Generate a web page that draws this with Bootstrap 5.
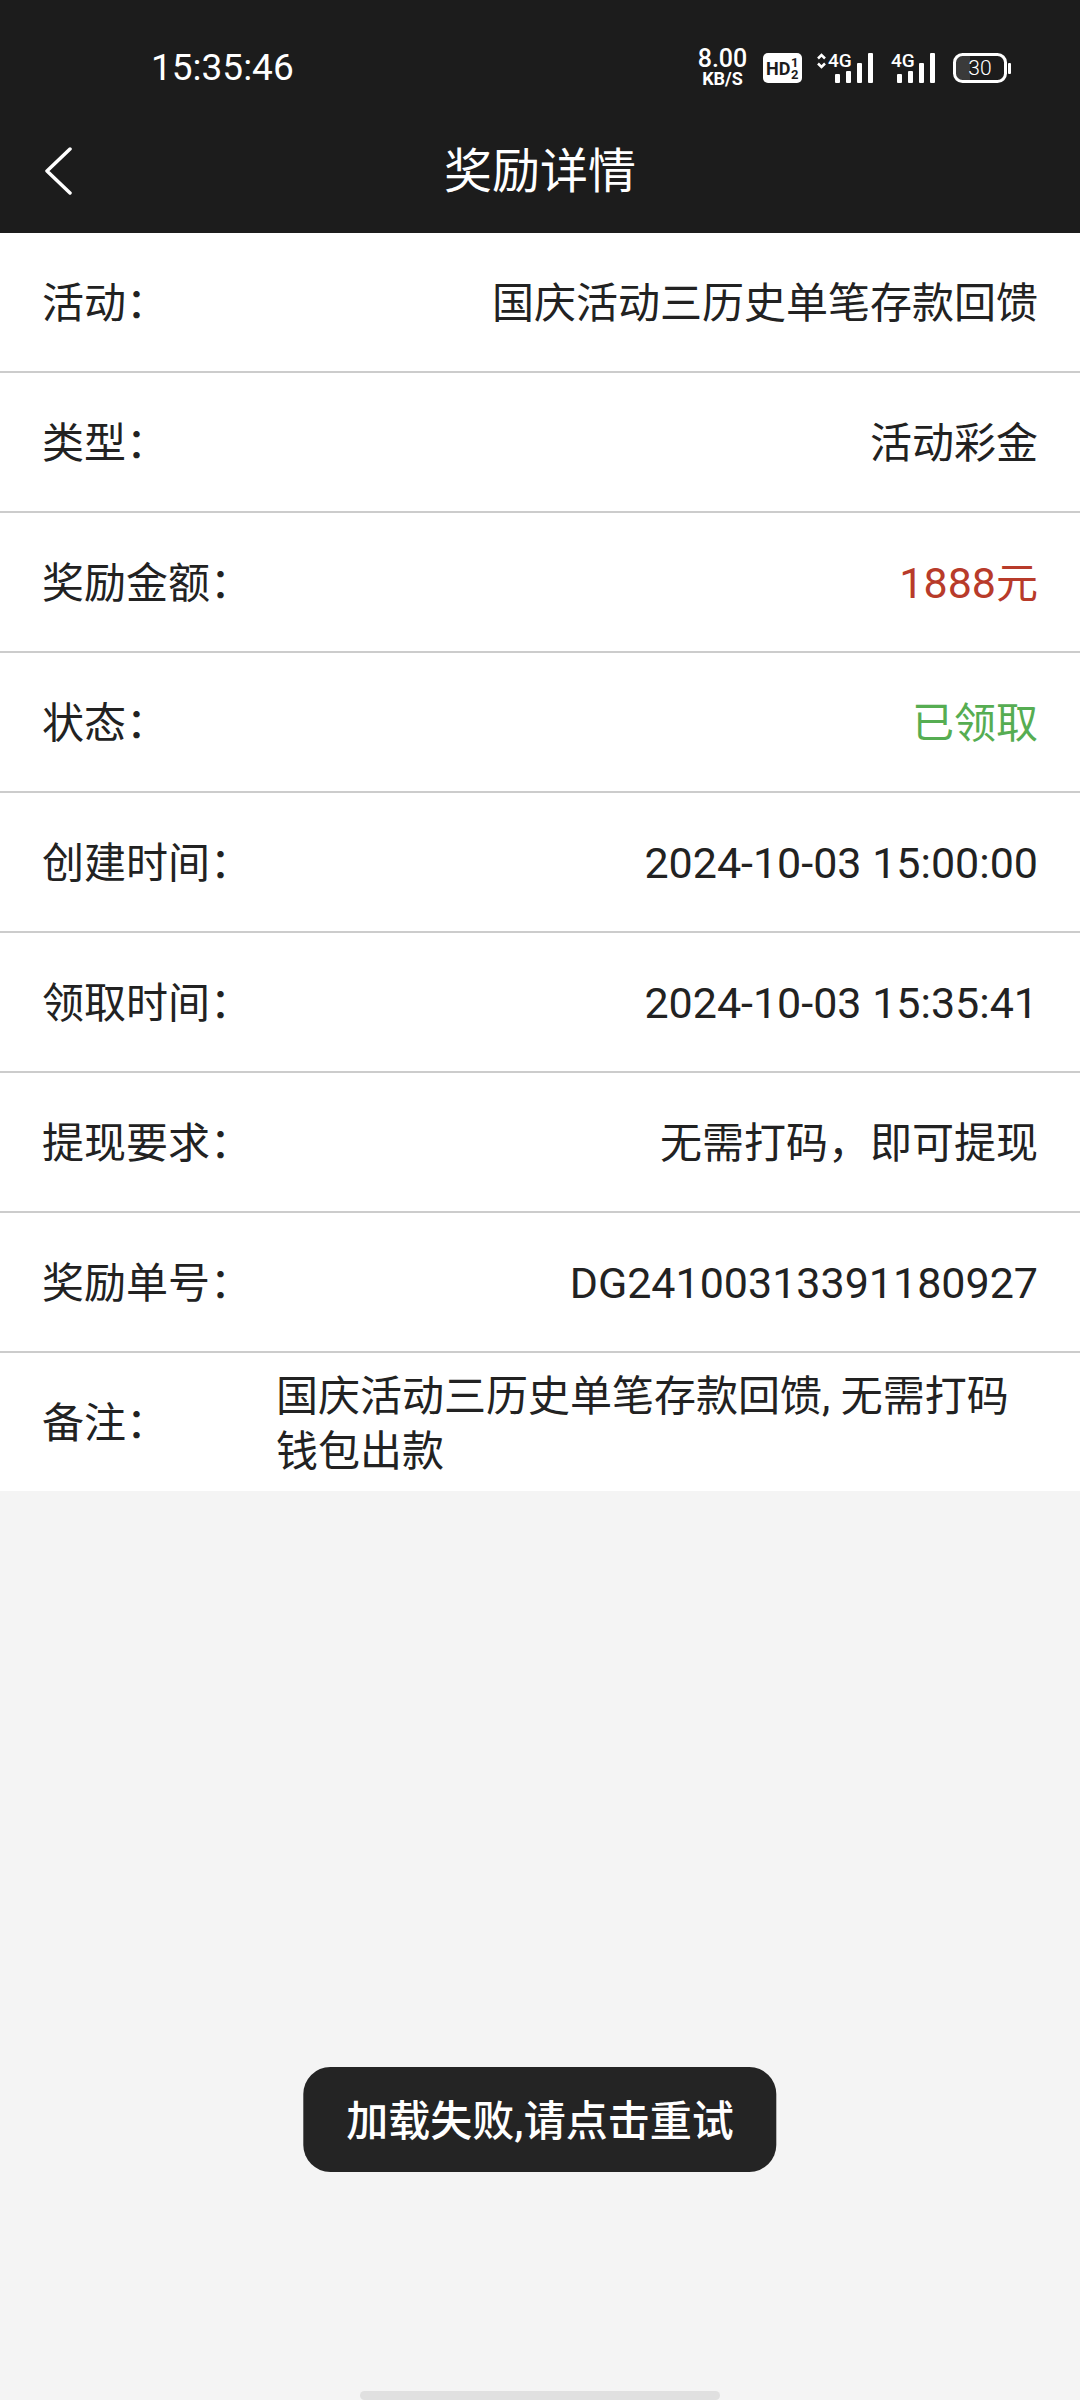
<!DOCTYPE html>
<html lang="zh-CN">
<head>
<meta charset="utf-8">
<meta name="viewport" content="width=device-width, initial-scale=1">
<title>奖励详情</title>
<link href="https://cdn.jsdelivr.net/npm/bootstrap@5.3.0/dist/css/bootstrap.min.css" rel="stylesheet">
<style>
  body { background: #f4f4f4; color: #222; font-family: Roboto, "Noto Sans CJK SC", sans-serif; font-size: 42px; line-height: 55px; }
  .top-area { background: #1c1c1c; }
  .status-strip { height: 108px; padding: 28px 69px 0 151px; }
  .clock { font-size: 37px; line-height: 40px; }
  .status-icons { gap: 15px; }
  .status-icons svg { overflow: visible; }
  .net-speed { width: 51px; font-size: 25px; line-height: 22px; font-weight: 500; }
  .net-unit { font-size: 18px; line-height: 18px; font-weight: 700; }
  .app-bar { height: 125px; display: grid; grid-template-columns: 120px 1fr 120px; }
  .back-btn { height: 100%; padding: 0 0 0 44px; }
  .app-title { padding-top: 3px; font-size: 48px; line-height: 64px; font-weight: 400; }
  .info-list .list-group-item { min-height: 140px; padding: 3px 42px 0; border-color: #ccc; border-width: 0 0 2px; color: inherit; }
  .info-list .list-group-item:last-child { min-height: 138px; border-bottom: 0; }
  .num { font-size: 43px; }
  .info-label { width: 234px; }
  .amount { color: #b83b2a; }
  .received { color: #56ad52; }
  .tip-toast { bottom: 228px; height: 105px; padding: 3px 43px 0; border-radius: 27px; background: #242424; font-weight: 500; }
  .home-bar { width: 360px; height: 9px; border-radius: 5px; background: #e0e0e0; }
</style>
</head>
<body>
<header class="top-area text-white">
  <div class="status-strip d-flex align-items-center justify-content-between">
    <span class="clock">15:35:46</span>
    <div class="status-icons d-flex align-items-center">
      <div class="net-speed d-flex flex-column align-items-center"><span>8.00</span><span class="net-unit">KB/S</span></div>
      <svg width="39" height="30" viewBox="0 0 39 30" role="img" aria-label="HD">
        <rect width="39" height="30" rx="5" fill="#fff"/>
        <g fill="#1c1c1c" font-family="Roboto, sans-serif" font-weight="700">
          <text x="3" y="22" font-size="18">HD</text>
          <text x="28" y="14" font-size="13">1</text>
          <text x="28" y="26" font-size="13">2</text>
        </g>
      </svg>
      <svg width="59" height="30" viewBox="0 0 59 30" role="img" aria-label="4G">
        <path d="M1 5.500L4.500 2L8 5.500M1 10.500L4.500 14L8 10.500" fill="none" stroke="#fff" stroke-width="2.500"/>
        <text x="11" y="14" font-size="19" fill="#fff" font-family="Roboto, sans-serif" font-weight="500">4G</text>
        <g fill="#fff"><rect x="18" y="21" width="5" height="9" rx="1"/><rect x="29" y="18" width="5" height="12" rx="1"/><rect x="40" y="10" width="5" height="20" rx="1"/><rect x="51" y="0" width="5" height="30" rx="1"/></g>
      </svg>
      <svg width="47" height="30" viewBox="0 0 47 30" role="img" aria-label="4G">
        <text x="0" y="14" font-size="19" fill="#fff" font-family="Roboto, sans-serif" font-weight="500">4G</text>
        <g fill="#fff"><rect x="6" y="21" width="5" height="9" rx="1"/><rect x="17" y="18" width="5" height="12" rx="1"/><rect x="28" y="10" width="5" height="20" rx="1"/><rect x="39" y="0" width="5" height="30" rx="1"/></g>
      </svg>
      <svg width="58" height="30" viewBox="0 0 58 30" role="img" aria-label="30%">
        <path d="M17 3H9Q3 3 3 9V21Q3 27 9 27H17Z" fill="#3a3a3a"/>
        <rect x="1.500" y="1.500" width="51" height="27" rx="8" fill="none" stroke="#fff" stroke-width="3"/>
        <rect x="55" y="10" width="3" height="11" rx="1" fill="#fff"/>
        <text x="27" y="22" text-anchor="middle" font-size="21" fill="#fff" font-family="Roboto, sans-serif" font-weight="300">30</text>
      </svg>
    </div>
  </div>
  <nav class="app-bar align-items-center" aria-label="页面导航">
    <button type="button" class="back-btn btn border-0 d-flex align-items-center" aria-label="返回">
      <svg width="30" height="48" viewBox="0 0 30 48" fill="none" stroke="#fff" stroke-width="3.500" stroke-linecap="round" stroke-linejoin="round"><path d="M26 2L3 24L26 46"/></svg>
    </button>
    <h1 class="app-title text-center m-0">奖励详情</h1>
  </nav>
</header>
<main>
  <ul class="info-list list-group list-group-flush">
    <li class="list-group-item d-flex align-items-center justify-content-between"><span>活动：</span><span>国庆活动三历史单笔存款回馈</span></li>
    <li class="list-group-item d-flex align-items-center justify-content-between"><span>类型：</span><span>活动彩金</span></li>
    <li class="list-group-item d-flex align-items-center justify-content-between"><span>奖励金额：</span><span class="amount"><span class="num">1888</span>元</span></li>
    <li class="list-group-item d-flex align-items-center justify-content-between"><span>状态：</span><span class="received">已领取</span></li>
    <li class="list-group-item d-flex align-items-center justify-content-between"><span>创建时间：</span><span class="num">2024-10-03 15:00:00</span></li>
    <li class="list-group-item d-flex align-items-center justify-content-between"><span>领取时间：</span><span class="num">2024-10-03 15:35:41</span></li>
    <li class="list-group-item d-flex align-items-center justify-content-between"><span>提现要求：</span><span>无需打码，即可提现</span></li>
    <li class="list-group-item d-flex align-items-center justify-content-between"><span>奖励单号：</span><span class="num">DG24100313391180927</span></li>
    <li class="list-group-item d-flex align-items-center"><span class="info-label flex-shrink-0">备注：</span><span>国庆活动三历史单笔存款回馈, 无需打码钱包出款</span></li>
  </ul>
</main>
<div class="tip-toast position-fixed start-50 translate-middle-x d-flex align-items-center text-white text-nowrap" role="status">加载失败,请点击重试</div>
<div class="home-bar position-fixed bottom-0 start-50 translate-middle-x"></div>
<script src="https://cdn.jsdelivr.net/npm/bootstrap@5.3.0/dist/js/bootstrap.bundle.min.js"></script>
</body>
</html>
